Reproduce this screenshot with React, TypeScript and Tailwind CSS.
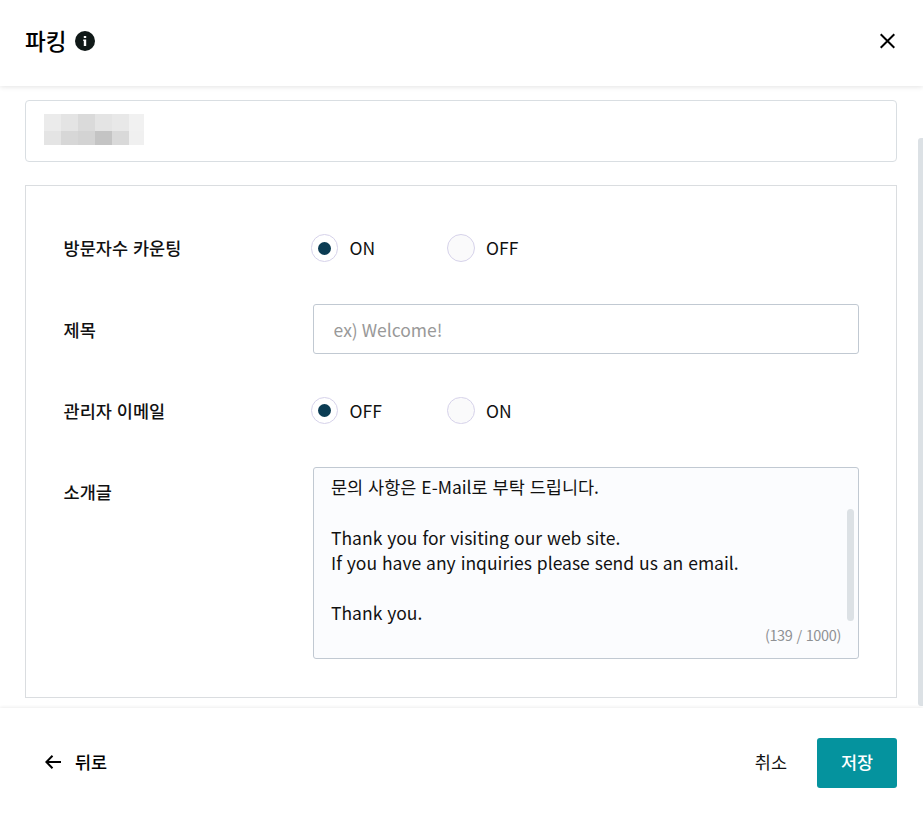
import React from 'react';
import { clsx } from 'clsx';

const mosaic = [
  'bg-[#ebebeb]', 'bg-[#e4e4e4]', 'bg-[#dadada]', 'bg-[#e4e4e4]', 'bg-[#e8e8e8]', 'bg-[#f1f1f1]',
  'bg-[#e4e4e4]', 'bg-[#d7d7d7]', 'bg-[#d3d3d3]', 'bg-[#c4c4c4]', 'bg-[#d9d9d9]', 'bg-[#f0f0f0]',
];

const introLines = [
  '문의 사항은 E-Mail로 부탁 드립니다.',
  '',
  'Thank you for visiting our web site.',
  'If you have any inquiries please send us an email.',
  '',
  'Thank you.',
];

function Radio({ label, checked, className }: { label: string; checked?: boolean; className?: string }) {
  return (
    <label className={clsx('flex h-full items-center', className)}>
      <span
        className={clsx(
          'flex h-full shrink-0 items-center justify-center rounded-full border border-[#d6d2ea]',
          checked ? 'w-[27px] bg-white' : 'w-[28px] bg-[#fafafb]'
        )}
      >
        {checked && <span className="size-[13px] rounded-full bg-[#0b3c53]" />}
      </span>
      <span className={clsx('leading-[26px]', checked ? 'ml-[11.6px]' : 'ml-[11px]')}>{label}</span>
    </label>
  );
}

function RadioRow({ options }: { options: [string, string] }) {
  return (
    <div className="-ml-[2px] flex h-full">
      <Radio label={options[0]} checked className="w-[136px]" />
      <Radio label={options[1]} />
    </div>
  );
}

function FieldLabel({ children }: { children: React.ReactNode }) {
  return <div className="-ml-[0.4px] w-[249.4px] shrink-0 font-medium leading-[26px]">{children}</div>;
}

export default function App() {
  return (
    <div className="flex h-[814px] w-[923px] flex-col overflow-hidden bg-white font-['Noto_Sans_CJK_KR','Noto_Sans',sans-serif] text-[17.5px] text-[#111] [word-spacing:1px]">
      {/* Header */}
      <header className="z-10 flex h-[86px] shrink-0 items-center justify-between bg-white pb-[4px] pl-[25px] pr-[28.5px] shadow-[0_1px_5px_rgba(0,0,0,0.11)]">
        <div className="flex items-center gap-[9px]">
          <h1 className="pb-[2px] text-[22.5px] font-medium leading-[32px] text-black">파킹</h1>
          <svg width="20" height="20" viewBox="0 0 20 20">
            <circle cx="10" cy="10" r="10" fill="#101918" />
            <rect x="8.8" y="5" width="2.4" height="2" fill="#fff" />
            <path d="M8.2 8.6h3v6.4H8.8v-5H8.2z" fill="#fff" />
          </svg>
        </div>
        <svg width="15" height="16" viewBox="0 0 15 16" stroke="#000" strokeWidth="2" fill="none">
          <path d="M.7 1.2l13.6 13.6M14.3 1.2L.7 14.8" />
        </svg>
      </header>

      {/* Scrollable body */}
      <main className="flex min-h-0 flex-1 justify-between pl-[25px]">
        <div className="w-[872px] pt-[14px]">
          <div className="h-[62px] rounded-[4px] border border-[#d9dee2] pl-[18px] pt-[13px]">
            <div className="grid w-[100px] grid-cols-[17px_17px_17px_17px_17px_15px] grid-rows-[17px_14px]">
              {mosaic.map((tone, i) => (
                <div key={i} className={tone} />
              ))}
            </div>
          </div>

          <section className="mt-[23px] h-[513px] border border-[#dadde0] pl-[38px] pr-[37px] pt-[48px]">
            <div className="flex h-[28px] items-center">
              <FieldLabel>방문자수 카운팅</FieldLabel>
              <RadioRow options={['ON', 'OFF']} />
            </div>

            <div className="mt-[42px] flex h-[50px] items-center">
              <div className="pt-[2px]">
                <FieldLabel>제목</FieldLabel>
              </div>
              <input
                className="h-[50px] w-[546px] rounded-[3px] border border-[#c1c9d2] pl-[19.6px] placeholder:text-[#999]"
                placeholder="ex) Welcome!"
              />
            </div>

            <div className="mt-[43px] flex h-[27px] items-center">
              <FieldLabel>관리자 이메일</FieldLabel>
              <RadioRow options={['OFF', 'ON']} />
            </div>

            <div className="mt-[43px] flex items-start">
              <div className="pt-[12px]">
                <FieldLabel>소개글</FieldLabel>
              </div>
              <div className="flex h-[192px] w-[546px] justify-between rounded-[3px] border border-[#c1c9d2] bg-[#fbfcfe] pl-[17px] pr-[4px]">
                <div className="flex w-[510px] flex-col">
                  <div className="pt-[6.4px]">
                    {introLines.map((line, i) => (
                      <p key={i} className="h-[25.2px] whitespace-nowrap leading-[25.2px]">{line}</p>
                    ))}
                  </div>
                  <div className="-mt-[0.6px] text-right text-[14.5px] leading-[20px] tracking-[-0.35px] text-[#8f9194]">(139 / 1000)</div>
                </div>
                <div className="mt-[41px] h-[112px] w-[7px] rounded-full bg-[#dce1e5]" />
              </div>
            </div>
          </section>
        </div>
        <div className="mt-[52px] h-[568px] w-[5px] rounded-l-[3px] bg-[#dce1e5]" />
      </main>

      {/* Footer */}
      <footer className="z-10 flex h-[106px] shrink-0 items-center justify-between bg-white pl-[45px] pr-[26px] pt-[4px] shadow-[0_-1px_3px_rgba(0,0,0,0.07)]">
        <button className="flex items-center gap-[14px] pb-[2px] text-[17.5px] font-medium text-black">
          <svg width="16" height="14" viewBox="0 0 16 14" stroke="#000" strokeWidth="2" fill="none">
            <path d="M7.5.7L1.4 7l6.1 6.3M1.5 7H16" />
          </svg>
          뒤로
        </button>
        <div className="flex items-center gap-[30px]">
          <button className="pb-[2px] text-[17.5px]">취소</button>
          <button className="h-[50px] w-[80px] rounded-[3px] bg-[#05939e] pb-[2px] text-[17.5px] font-medium text-white">저장</button>
        </div>
      </footer>
    </div>
  );
}
